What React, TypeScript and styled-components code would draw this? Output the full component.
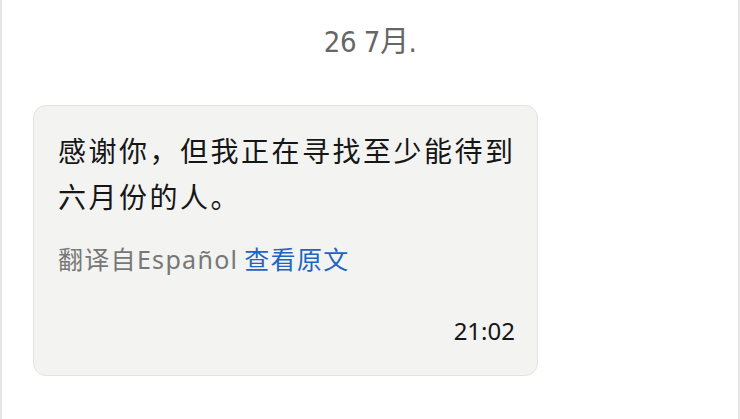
import React from 'react';
import styled, { createGlobalStyle } from 'styled-components';

const GlobalStyle = createGlobalStyle`
    html, body {
        margin: 0;
        padding: 0;
        background: #ffffff;
    }
    * {
        box-sizing: border-box;
    }
`;

const Screen = styled.div`
    width: 740px;
    height: 419px;
    overflow: hidden;
    background: #ffffff;
    border-left: 2px solid #e6e6e6;
    border-right: 2px solid #e6e6e6;
    font-family: "Noto Sans", "Noto Sans CJK SC", sans-serif;
    display: flex;
    flex-direction: column;
`;

const DateLabel = styled.div`
    height: 80px;
    display: flex;
    align-items: center;
    justify-content: center;
    padding-bottom: 2px;
    color: #666666;
    font-size: 29px;
    font-stretch: condensed;
    font-family: "DejaVu Sans", "Noto Sans CJK SC", sans-serif;
    letter-spacing: -0.5px;
`;

const Thread = styled.div`
    padding: 25px 0 0 31px;
`;

const Bubble = styled.div`
    width: 505px;
    height: 271px;
    padding: 22px 20px 0 24px;
    background: #f3f3f1;
    border: 1px solid #e3e3e1;
    border-radius: 13px;
    display: flex;
    flex-direction: column;
`;

const MessageText = styled.p`
    margin: 0;
    font-size: 28px;
    line-height: 46px;
    letter-spacing: 2.5px;
    color: #161616;
`;

const TranslationRow = styled.div`
    margin-top: 21px;
    font-size: 25px;
    line-height: 36px;
    color: #777777;
    letter-spacing: 1.3px;
`;

const Link = styled.span`
    color: #1f63c4;
    margin-left: 6px;
`;

const Time = styled.div`
    margin-top: 39px;
    align-self: flex-end;
    font-size: 24px;
    line-height: 30px;
    color: #161616;
    padding-right: 2px;
`;

export default function App() {
    return (
        <>
            <GlobalStyle />
            <Screen>
                <DateLabel>26 7月.</DateLabel>
                <Thread>
                    <Bubble>
                        <MessageText>感谢你，但我正在寻找至少能待到六月份的人。</MessageText>
                        <TranslationRow>
                            翻译自Español<Link>查看原文</Link>
                        </TranslationRow>
                        <Time>21:02</Time>
                    </Bubble>
                </Thread>
            </Screen>
        </>
    );
}
